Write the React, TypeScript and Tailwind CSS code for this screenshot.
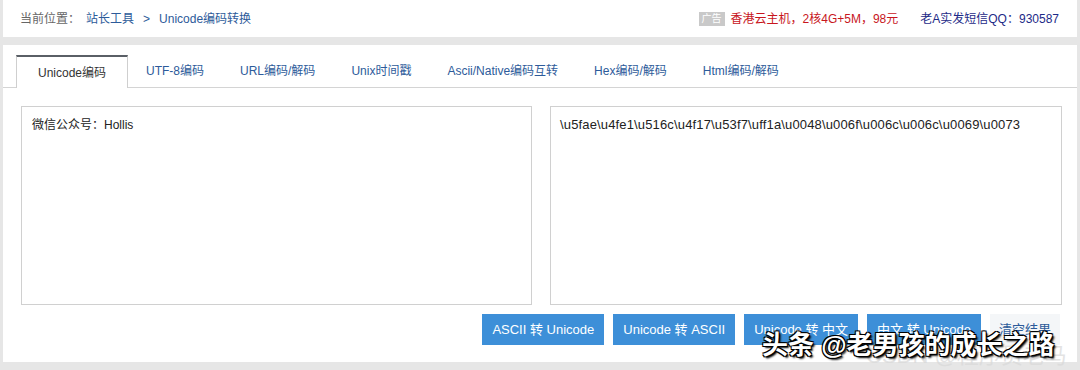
export default function App() {
  const tabs = ['UTF-8编码', 'URL编码/解码', 'Unix时间戳', 'Ascii/Native编码互转', 'Hex编码/解码', 'Html编码/解码']
  const buttons = ['ASCII 转 Unicode', 'Unicode 转 ASCII', 'Unicode 转 中文', '中文 转 Unicode']

  return (
    <div className="relative w-[1080px] h-[370px] bg-[#e6e6e6] px-[3px] font-['Liberation_Sans','Noto_Sans_CJK_SC',sans-serif] text-[12px] overflow-hidden">
      {/* top bar */}
      <div className="h-[37px] bg-white flex items-center pl-[17px] pr-[18px]">
        <span className="text-[#666]">当前位置：</span>
        <span className="ml-[6px] text-[#2d5b9a]">站长工具</span>
        <span className="mx-[9px] text-[#2d5b9a]">&gt;</span>
        <span className="text-[#2d5b9a]">Unicode编码转换</span>
        <div className="ml-auto flex items-center">
          <span className="bg-[#c9c9c9] text-white text-[10px] leading-[14px] px-[3px]">广告</span>
          <span className="ml-[6px] text-[#c8161d]">香港云主机，2核4G+5M，98元</span>
          <span className="ml-[22px] text-[#1d2a87]">老A实发短信QQ：930587</span>
        </div>
      </div>

      {/* main panel */}
      <div className="mt-[8px] h-[317px] bg-white">
        <div className="pt-[10px] pl-[13px] border-b border-[#d4d4d4] flex items-end">
          <div className="h-[33px] px-[21px] flex items-center border-t-2 border-t-[#5a5f66] border-x border-x-[#cfcfcf] bg-white text-[#333] -mb-px">
            Unicode编码
          </div>
          {tabs.map((t) => (
            <div key={t} className="h-[32px] px-[18px] flex items-center text-[#2d5b9a]">
              {t}
            </div>
          ))}
        </div>

        <div className="flex gap-[18px] pl-[18px] pr-[15px] pt-[18px]">
          <div className="w-[511px] h-[199px] border border-[#d0d0d0] px-[10px] py-[9px] text-[#222]">
            微信公众号：Hollis
          </div>
          <div className="w-[512px] h-[199px] border border-[#d0d0d0] px-[9px] py-[8px] text-[#222] text-[13px] tracking-[0.15px]">
            \u5fae\u4fe1\u516c\u4f17\u53f7\uff1a\u0048\u006f\u006c\u006c\u0069\u0073
          </div>
        </div>

        <div className="flex justify-end gap-[9px] pr-[17px] mt-[9px]">
          {buttons.map((b) => (
            <div key={b} className="h-[31px] px-[10px] flex items-center bg-[#3d8fd8] text-white text-[13px]">
              {b}
            </div>
          ))}
          <div className="h-[31px] px-[9px] flex items-center bg-[#f4f6f8] text-[#2d5b9a] text-[13px]">
            清空结果
          </div>
        </div>
      </div>

      {/* watermark */}
      <div className="absolute left-[866px] top-[339px] text-[22px] text-[#d8d8d8] opacity-70">CSDN @程序员老马</div>
      <div className="absolute left-[762px] top-[326px] text-[26px] text-white font-bold [text-shadow:1px_1px_0_#000,-1px_-1px_0_#000,1px_-1px_0_#000,-1px_1px_0_#000,2px_2px_2px_#000]">
        头条 @老男孩的成长之路
      </div>
    </div>
  )
}
